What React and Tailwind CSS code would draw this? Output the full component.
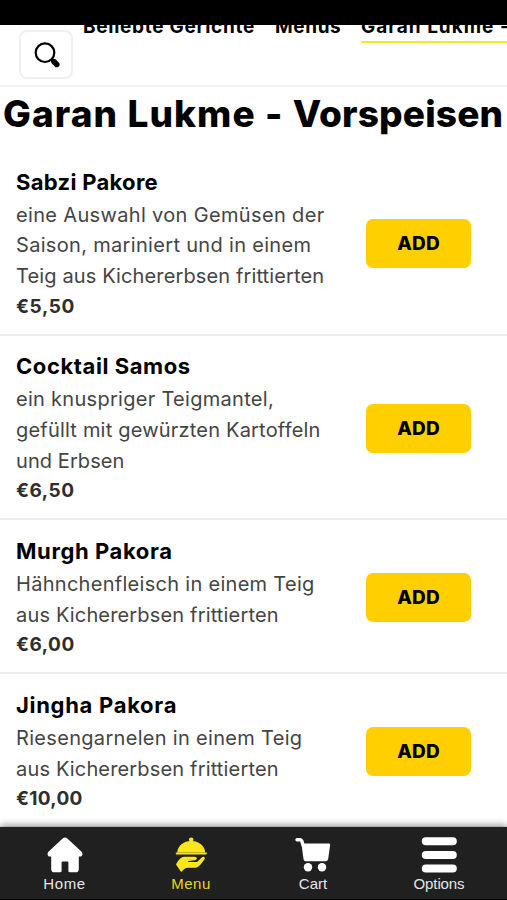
const tabs = [
  { label: "Beliebte Gerichte", className: "w-[172px] tracking-[0.72px]" },
  { label: "Menüs", className: "w-[66px] tracking-[0.6px]" },
  { label: "Garan Lukme - Vorspeisen", className: "w-[260px] tracking-[1px]", active: true },
];

const dishes = [
  {
    name: "Sabzi Pakore",
    nameClass: "tracking-[0.3px]",
    price: "€5,50",
    priceClass: "tracking-[0.6px]",
    lines: [
      ["eine Auswahl von Gemüsen der", "tracking-[0.34px]"],
      ["Saison, mariniert und in einem", "tracking-[0.32px]"],
      ["Teig aus Kichererbsen frittierten", "tracking-[0.13px]"],
    ],
  },
  {
    name: "Cocktail Samos",
    nameClass: "tracking-[0.58px]",
    price: "€6,50",
    priceClass: "tracking-[0.5px]",
    lines: [
      ["ein knuspriger Teigmantel,", "tracking-[0.29px]"],
      ["gefüllt mit gewürzten Kartoffeln", "tracking-[0.2px]"],
      ["und Erbsen", "tracking-[0.08px]"],
    ],
  },
  {
    name: "Murgh Pakora",
    nameClass: "tracking-[0.6px]",
    price: "€6,00",
    priceClass: "tracking-[0.5px]",
    lines: [
      ["Hähnchenfleisch in einem Teig", "tracking-[0.29px]"],
      ["aus Kichererbsen frittierten", "tracking-[0.16px]"],
    ],
  },
  {
    name: "Jingha Pakora",
    nameClass: "tracking-[0.7px]",
    price: "€10,00",
    priceClass: "tracking-[0.3px]",
    lines: [
      ["Riesengarnelen in einem Teig", "tracking-[0.31px]"],
      ["aus Kichererbsen frittierten", "tracking-[0.16px]"],
    ],
  },
];

const SearchIcon = () => (
  <svg width="26" height="26" viewBox="0 0 26 26" fill="none" stroke="black">
    <circle cx="11" cy="10.7" r="9.3" strokeWidth="2.2" />
    <path d="M17.1 16.8l3 3" strokeWidth="3" />
    <path d="M19.900 19.6l2.8 2.800" strokeWidth="5.6" strokeLinecap="round" />
  </svg>
);

const HomeIcon = () => (
  <svg width="36" height="36" viewBox="0 0 36 36" fill="currentColor">
    <path d="M16.2 1.100c1.100-.9 2.500-.9 3.600 0L34.600 14.800c1.600 1.600.8 4.800-1.400 4.800h-1.400v12.600c0 1.900-1.200 3.100-2.900 3.100h-6.300c-.7 0-1.200-.5-1.200-1.200v-8.300c0-.9-.5-1.300-1.300-1.300h-4.200c-.8 0-1.300.4-1.300 1.300v8.300c0 .7-.5 1.200-1.200 1.200H7.100c-1.700 0-2.900-1.200-2.900-3.100V19.600H2.800c-2.200 0-3-3.200-1.400-4.800z" />
  </svg>
);

const ServeIcon = () => (
  <svg width="34" height="36" viewBox="0 0 34 36" fill="currentColor">
    <circle cx="17.200" cy="2.800" r="2.300" />
    <path d="M3.200 15.600C3.500 8.900 9.500 4 17.200 4s13.700 4.900 14 11.600z" />
    <path d="M1.800 15.400h31v1.100c0 .5-.4.900-.9.900H2.700c-.5 0-.9-.4-.9-.9z" />
    <path d="M2 27.500c2-3.700 4.600-7.400 8.200-7.700h10.400c3 0 2.900 3.200.2 3.500l-6.200.6c-.9.100-.8 1.200.1 1.200h6.900c1.200 0 1.900-.4 2.600-1.100l3.500-3.500c1.700-1.500 4-.3 2.900 1.600-1.700 2.700-3.800 5.700-6.200 7.500-1.100.8-2.300 1.200-3.700 1.200h-6.800c-2.300 0-3.500 1-4.900 2.400l-1.800 1.900z" />
  </svg>
);

const CartIcon = () => (
  <svg width="36" height="36" viewBox="0 0 36 36" fill="currentColor">
    <path d="M2 2.700h3.200c1 0 1.400.5 1.700 1.500l1 3.600" fill="none" stroke="currentColor" strokeWidth="3.400" strokeLinecap="round" />
    <path d="M6.400 6.600h27.300c1 0 1.500.7 1.400 1.600l-1.900 13.600c-.3 1.700-1.100 2.400-2.600 2.400H11.300c-1.600 0-2.500-.8-2.800-2.300z" />
    <circle cx="13" cy="30.300" r="4.200" />
    <circle cx="27" cy="30.300" r="4.200" />
  </svg>
);

const OptionsIcon = () => (
  <svg width="36" height="36" viewBox="0 0 36 36" fill="currentColor">
    <rect x="0.800" y="0.300" width="35" height="8" rx="4" />
    <rect x="0.800" y="13.900" width="35" height="8" rx="4" />
    <rect x="0.800" y="27.500" width="35" height="8" rx="4" />
  </svg>
);

const navItems = [
  { label: "Home", Icon: HomeIcon, className: "w-[129px] text-white", labelClass: "tracking-[0.6px] text-[#e6e6e6]" },
  { label: "Menu", Icon: ServeIcon, className: "w-[124px] text-[#fbe61e]", labelClass: "tracking-[0.5px] text-[#e8d520]" },
  { label: "Cart", Icon: CartIcon, className: "w-[120px] text-white", labelClass: "text-[#e6e6e6]" },
  { label: "Options", Icon: OptionsIcon, className: "w-[132px] text-white", labelClass: "-tracking-[0.1px] text-[#e6e6e6]" },
];

const Header = () => (
  <header className="flex h-[62px] shrink-0 items-start overflow-hidden border-b-2 border-[#f2f2f2] pl-[19px]">
    <button
      type="button"
      aria-label="Suche"
      className="mt-[5px] flex h-[49px] w-[54px] shrink-0 items-center justify-center rounded-lg border-2 border-[#f0f0f0] pl-[2px]"
    >
      <SearchIcon />
    </button>
    <nav className="-mt-[12px] ml-[10px] flex gap-[20px] text-[19px] leading-[28px] font-bold whitespace-nowrap">
      {tabs.map(({ label, className, active }) => (
        <div key={label} className={`h-[30px] shrink-0 ${className}`}>
          {label}
          {active && <div className="h-[2px] bg-[#fae529]" />}
        </div>
      ))}
    </nav>
  </header>
);

const Dish = ({ name, nameClass, price, priceClass, lines }) => (
  <li className="flex items-center justify-between border-b-2 border-[#ededed] pt-[13.8px] pr-9 pb-[11.3px] pl-4">
    <div className="whitespace-nowrap">
      <h2 className={`text-[22px] leading-[34.4px] font-bold ${nameClass}`}>{name}</h2>
      <p className="pt-[0.7px] text-[20px] leading-[30.6px] text-[#444]">
        {lines.map(([text, tracking]) => (
          <span key={text} className={`block ${tracking}`}>
            {text}
          </span>
        ))}
      </p>
      <p className={`text-[19px] leading-[30.6px] font-bold text-[#2e2e2e] ${priceClass}`}>{price}</p>
    </div>
    <button
      type="button"
      className="h-[49px] w-[105px] rounded-[7px] bg-[#ffcf00] pt-[2px] text-[19px] font-extrabold tracking-[0.2px]"
    >
      ADD
    </button>
  </li>
);

const BottomNav = () => (
  <nav className="relative flex h-[73px] shrink-0 border-b border-black bg-[#202020] shadow-[0_-2px_7px_rgba(0,0,0,0.4)]">
    {navItems.map(({ label, Icon, className, labelClass }) => (
      <a key={label} className={`flex flex-col items-center pt-[10px] ${className}`}>
        <Icon />
        <span className={`mt-[2px] font-['Liberation_Sans',sans-serif] text-[15px] leading-[18px] ${labelClass}`}>
          {label}
        </span>
      </a>
    ))}
  </nav>
);

export default function App() {
  return (
    <div className="flex h-[900px] w-[507px] flex-col overflow-hidden bg-white font-['Inter',sans-serif] text-black">
      <div className="h-[25px] shrink-0 bg-black" />
      <Header />
      <main className="min-h-0 flex-1">
        <h1 className="pt-[5px] pl-[3px] text-[37px] leading-[44px] font-extrabold whitespace-nowrap">
          <span className="tracking-[1.1px]">Garan Lukme - </span>
          <span className="tracking-[0.15px]">Vorspeisen</span>
        </h1>
        <ul className="pt-[15px]">
          {dishes.map((dish) => (
            <Dish key={dish.name} {...dish} />
          ))}
        </ul>
      </main>
      <BottomNav />
    </div>
  );
}
